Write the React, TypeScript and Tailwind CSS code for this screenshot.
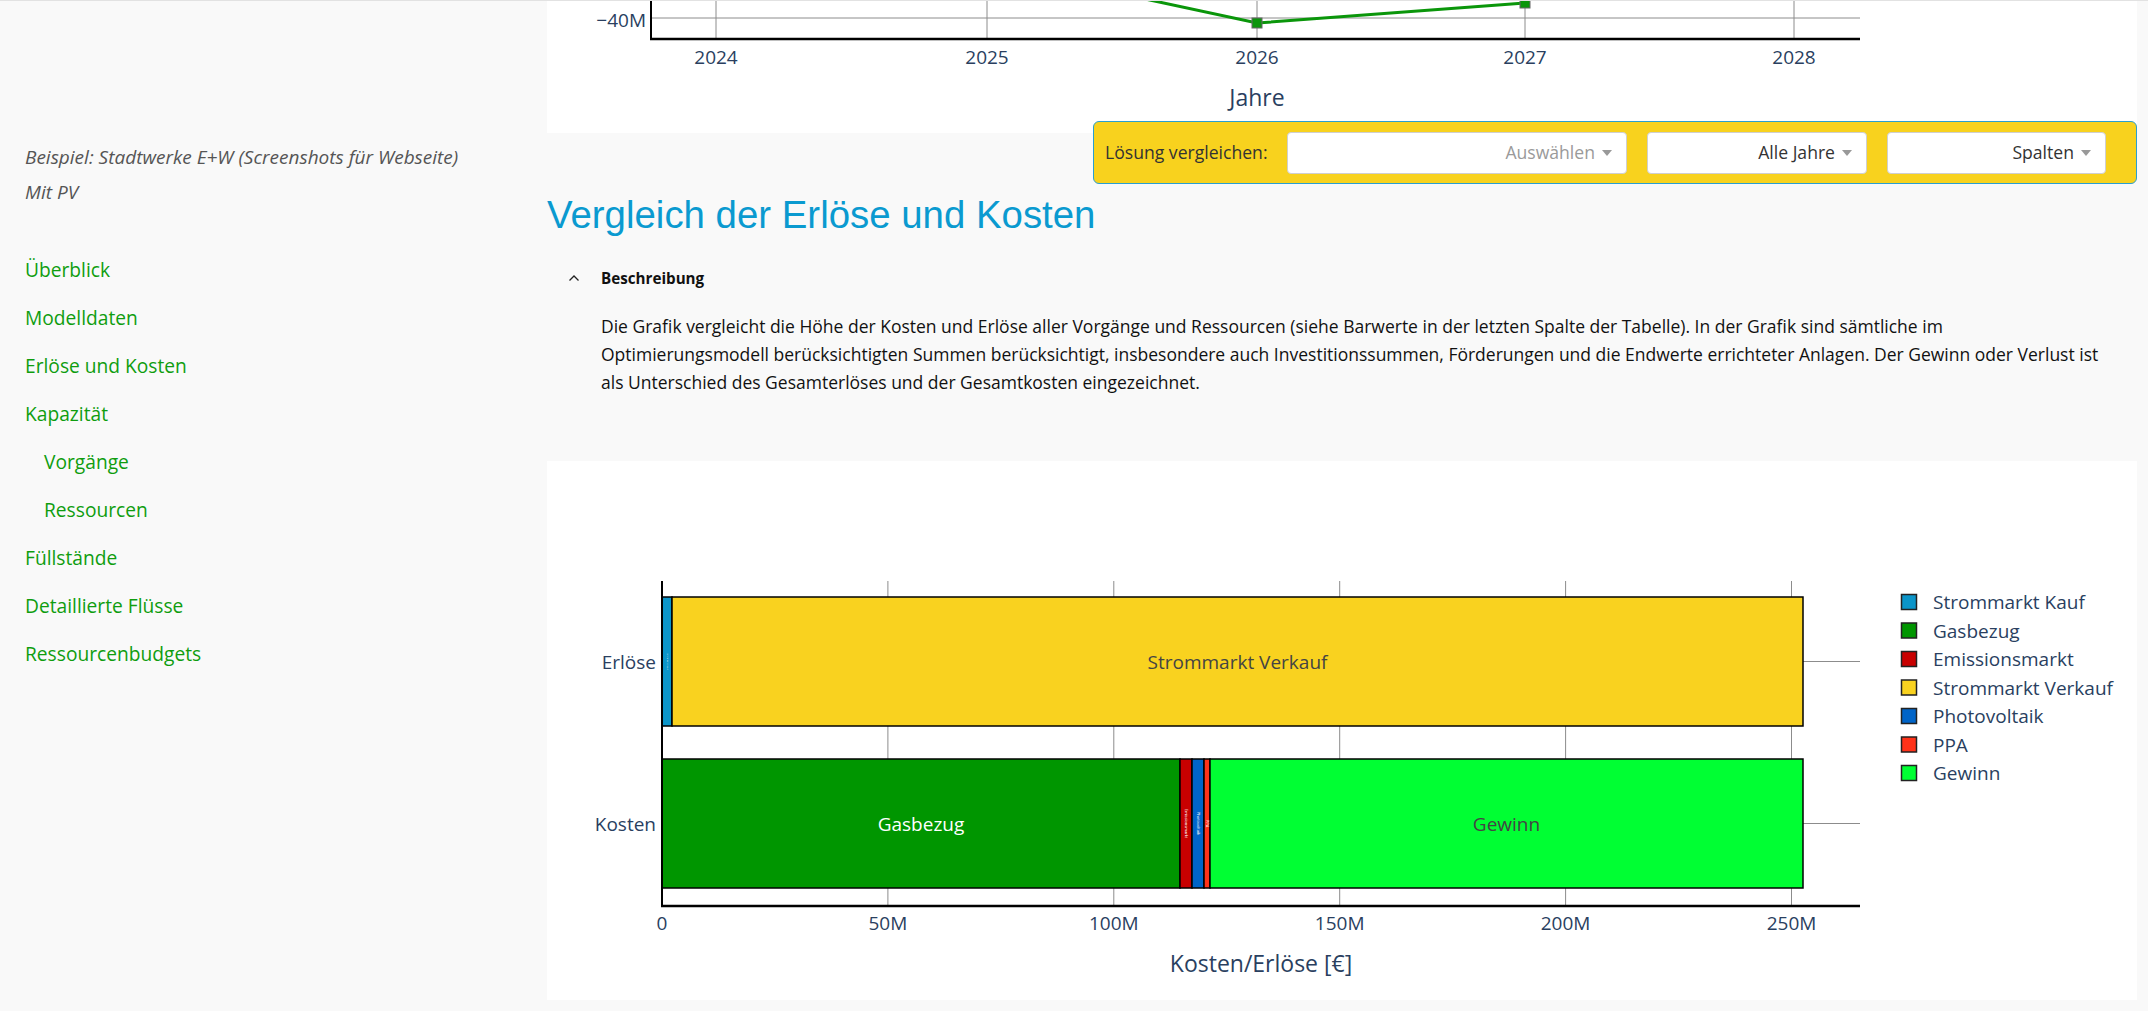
import React from 'react';

const navy = '#2a3f5f';
const grid = '#8c8c8c';

const colors = {
  kauf: '#0b95c9',
  gas: '#009600',
  emis: '#c80000',
  verkauf: '#f9d21f',
  pv: '#0064c8',
  ppa: '#ff3219',
  gewinn: '#00ff33',
};

const navItems = [
  { label: 'Überblick', indent: false },
  { label: 'Modelldaten', indent: false },
  { label: 'Erlöse und Kosten', indent: false },
  { label: 'Kapazität', indent: false },
  { label: 'Vorgänge', indent: true },
  { label: 'Ressourcen', indent: true },
  { label: 'Füllstände', indent: false },
  { label: 'Detaillierte Flüsse', indent: false },
  { label: 'Ressourcenbudgets', indent: false },
];

const legend = [
  { label: 'Strommarkt Kauf', color: colors.kauf },
  { label: 'Gasbezug', color: colors.gas },
  { label: 'Emissionsmarkt', color: colors.emis },
  { label: 'Strommarkt Verkauf', color: colors.verkauf },
  { label: 'Photovoltaik', color: colors.pv },
  { label: 'PPA', color: colors.ppa },
  { label: 'Gewinn', color: colors.gewinn },
];

const font = "'Open Sans', 'Liberation Sans', sans-serif";

function YearChart() {
  const years = [
    { x: 169, label: '2024' },
    { x: 440, label: '2025' },
    { x: 710, label: '2026' },
    { x: 978, label: '2027' },
    { x: 1247, label: '2028' },
  ];
  return (
    <svg width="1590" height="133" viewBox="0 0 1590 133" style={{ fontFamily: font }}>
      {years.map((y) => (
        <line key={y.label} x1={y.x} y1={0} x2={y.x} y2={39} stroke={grid} strokeWidth={1} />
      ))}
      <line x1={104} y1={18} x2={1313} y2={18} stroke={grid} strokeWidth={1} />
      <polyline points="556,-10 710,23 978,3" fill="none" stroke="#0a960a" strokeWidth={3} />
      <rect x={705} y={18} width={10} height={10} fill="#0a960a" stroke="#666" strokeWidth={1} />
      <rect x={973} y={-2} width={10} height={10} fill="#0a960a" stroke="#666" strokeWidth={1} />
      <line x1={104} y1={0} x2={104} y2={40} stroke="#000" strokeWidth={2} />
      <line x1={103} y1={39} x2={1313} y2={39} stroke="#000" strokeWidth={2.5} />
      <text x={99} y={20} textAnchor="end" dominantBaseline="central" fontSize={19} fill={navy}>
        −40M
      </text>
      {years.map((y) => (
        <text key={y.label} x={y.x} y={57} textAnchor="middle" dominantBaseline="central" fontSize={19} fill={navy}>
          {y.label}
        </text>
      ))}
      <text x={710} y={97} textAnchor="middle" dominantBaseline="central" fontSize={23} fill={navy}>
        Jahre
      </text>
    </svg>
  );
}

function CostChart() {
  const x0 = 115;
  const scale = 4.518;
  const ticks = [0, 50, 100, 150, 200, 250];
  const plotTop = 120;
  const axisY = 445;
  const right = 1313;

  const erloese = [
    { x1: 115, x2: 125, color: colors.kauf },
    { x1: 125, x2: 1256, color: colors.verkauf },
  ];
  const kosten = [
    { x1: 115, x2: 633, color: colors.gas },
    { x1: 633, x2: 645, color: colors.emis },
    { x1: 645, x2: 657, color: colors.pv },
    { x1: 657, x2: 663, color: colors.ppa },
    { x1: 663, x2: 1256, color: colors.gewinn },
  ];

  return (
    <svg width="1590" height="539" viewBox="0 0 1590 539" style={{ fontFamily: font }}>
      {/* grid */}
      {ticks.slice(1).map((t) => (
        <line key={t} x1={x0 + t * scale} y1={plotTop} x2={x0 + t * scale} y2={axisY} stroke={grid} strokeWidth={1} />
      ))}
      <line x1={x0} y1={200.5} x2={right} y2={200.5} stroke={grid} strokeWidth={1.2} />
      <line x1={x0} y1={362.5} x2={right} y2={362.5} stroke={grid} strokeWidth={1.2} />

      {/* bars */}
      {erloese.map((b, i) => (
        <rect key={i} x={b.x1} y={136} width={b.x2 - b.x1} height={129} fill={b.color} stroke="#000" strokeWidth={1.5} />
      ))}
      {kosten.map((b, i) => (
        <rect key={i} x={b.x1} y={298} width={b.x2 - b.x1} height={129} fill={b.color} stroke="#000" strokeWidth={1.5} />
      ))}

      <text x={120} y={200.5} textAnchor="middle" dominantBaseline="central" fontSize={2} fill="#fff" transform="rotate(90 120 200.5)">
        Strommarkt Kauf
      </text>
      <text x={690.5} y={200.5} textAnchor="middle" dominantBaseline="central" fontSize={19} fill="#444">
        Strommarkt Verkauf
      </text>
      <text x={374} y={362.5} textAnchor="middle" dominantBaseline="central" fontSize={19} fill="#fff">
        Gasbezug
      </text>
      <text x={639} y={362.5} textAnchor="middle" dominantBaseline="central" fontSize={4} fill="#fff" transform="rotate(90 639 362.5)">
        Emissionsmarkt
      </text>
      <text x={651} y={362.5} textAnchor="middle" dominantBaseline="central" fontSize={4} fill="#fff" transform="rotate(90 651 362.5)">
        Photovoltaik
      </text>
      <text x={660} y={362.5} textAnchor="middle" dominantBaseline="central" fontSize={4} fill="#fff" transform="rotate(90 660 362.5)">
        PPA
      </text>
      <text x={959.5} y={362.5} textAnchor="middle" dominantBaseline="central" fontSize={19} fill="#444">
        Gewinn
      </text>

      {/* axes */}
      <line x1={x0} y1={plotTop} x2={x0} y2={axisY + 1} stroke="#000" strokeWidth={2} />
      <line x1={x0 - 1} y1={axisY} x2={right} y2={axisY} stroke="#000" strokeWidth={2.5} />

      {ticks.map((t) => (
        <text key={t} x={x0 + t * scale} y={462} textAnchor="middle" dominantBaseline="central" fontSize={19} fill={navy}>
          {t === 0 ? '0' : `${t}M`}
        </text>
      ))}
      <text x={714} y={502} textAnchor="middle" dominantBaseline="central" fontSize={23} fill={navy}>
        Kosten/Erlöse [€]
      </text>
      <text x={109} y={201} textAnchor="end" dominantBaseline="central" fontSize={19} fill={navy}>
        Erlöse
      </text>
      <text x={109} y={363} textAnchor="end" dominantBaseline="central" fontSize={19} fill={navy}>
        Kosten
      </text>

      {/* legend */}
      {legend.map((l, i) => {
        const cy = 141 + i * 28.5;
        return (
          <g key={l.label}>
            <rect x={1354.5} y={cy - 7.5} width={15} height={15} fill={l.color} stroke="#222" strokeWidth={1.5} />
            <text x={1386} y={cy} dominantBaseline="central" fontSize={19} fill={navy}>
              {l.label}
            </text>
          </g>
        );
      })}
    </svg>
  );
}

function SelectBox({ label, width, muted }: { label: string; width: string; muted?: boolean }) {
  return (
    <div className={`flex h-[42px] items-center justify-end gap-[7px] rounded-[4px] border border-[#cfcfcf] bg-white pr-[14px] ${width}`}>
      <span className={muted ? 'text-[#9a9a9a]' : 'text-[#333]'}>{label}</span>
      <span className="h-0 w-0 border-x-[5px] border-t-[6px] border-x-transparent border-t-[#999]" />
    </div>
  );
}

export default function App() {
  return (
    <div className="relative flex min-h-screen bg-[#f9f9f9] font-['Open_Sans','Liberation_Sans',sans-serif]">
      <div className="pointer-events-none absolute inset-x-0 top-0 z-20 h-px bg-[#e2e2e2]" />

      {/* Sidebar */}
      <aside className="w-[547px] shrink-0 pl-[25px]">
        <div className="pt-[145px] text-[19px] leading-[24px] italic text-[#555]">
          <p>Beispiel: Stadtwerke E+W (Screenshots für Webseite)</p>
          <p className="mt-[11px]">Mit PV</p>
        </div>
        <nav className="mt-[42px] flex flex-col">
          {navItems.map((item) => (
            <a
              key={item.label}
              href="#"
              className={`h-[48px] text-[19.2px] leading-[48px] text-[#0f9d0f] ${item.indent ? 'pl-[19px]' : ''}`}
            >
              {item.label}
            </a>
          ))}
        </nav>
      </aside>

      {/* Main */}
      <main className="flex w-[1590px] shrink-0 flex-col">
        <div className="h-[133px] overflow-hidden bg-white">
          <YearChart />
        </div>

        <div className="relative z-10 -mt-[12px] flex h-[63px] w-[1044px] items-center justify-between self-end rounded-[6px] border border-[#2a9fd0] bg-[#f8d21e] pl-[11px] pr-[30px] text-[17.6px]">
          <span className="text-[#333]">Lösung vergleichen:</span>
          <div className="flex gap-[20px]">
            <SelectBox label="Auswählen" width="w-[340px]" muted />
            <SelectBox label="Alle Jahre" width="w-[220px]" />
            <SelectBox label="Spalten" width="w-[219px]" />
          </div>
        </div>

        <h1 className="mt-[8px] h-[46px] font-['Liberation_Sans',Arial,sans-serif] text-[38.4px] leading-[46px] text-[#0a9ad0]">
          Vergleich der Erlöse und Kosten
        </h1>

        <div className="mt-[29px] flex h-[22px] items-center">
          <svg width="12" height="8" viewBox="0 0 12 8" className="ml-[21px]">
            <polyline points="1.5,6.5 6,2 10.5,6.5" fill="none" stroke="#222" strokeWidth="1.3" />
          </svg>
          <span className="ml-[21px] text-[15.2px] font-bold text-[#111]">Beschreibung</span>
        </div>

        <p className="mt-[23px] ml-[54px] w-[1510px] text-[17.5px] leading-[28px] text-[#111]">
          Die Grafik vergleicht die Höhe der Kosten und Erlöse aller Vorgänge und Ressourcen (siehe Barwerte in der
          letzten Spalte der Tabelle). In der Grafik sind sämtliche im Optimierungsmodell berücksichtigten Summen
          berücksichtigt, insbesondere auch Investitionssummen, Förderungen und die Endwerte errichteter Anlagen. Der
          Gewinn oder Verlust ist als Unterschied des Gesamterlöses und der Gesamtkosten eingezeichnet.
        </p>

        <div className="mt-[65px] h-[539px] bg-white">
          <CostChart />
        </div>
      </main>
    </div>
  );
}
